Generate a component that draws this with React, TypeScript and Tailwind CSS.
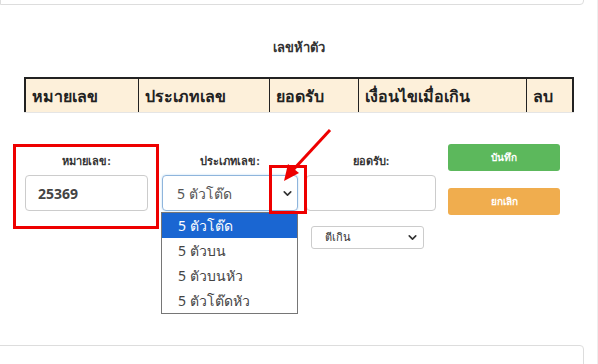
import { ChevronDown } from "lucide-react";

const columns = [
  { label: "หมายเลข", w: "w-[113px]" },
  { label: "ประเภทเลข", w: "w-[131px]" },
  { label: "ยอดรับ", w: "w-[89px]" },
  { label: "เงื่อนไขเมื่อเกิน", w: "w-[168px]" },
  { label: "ลบ", w: "flex-1" },
];

const options = ["5 ตัวโต๊ด", "5 ตัวบน", "5 ตัวบนหัว", "5 ตัวโต๊ดหัว"];

export default function App() {
  return (
    <div
      className="relative w-[598px] h-[364px] overflow-hidden bg-white text-[#333]"
      style={{ fontFamily: '"Tahoma", "Noto Sans", "DejaVu Sans", sans-serif' }}
    >
      {/* Previous card (cut off) */}
      <div className="absolute left-0 top-[-20px] w-[584px] h-[25px] border border-[#ddd] rounded-br" />
      <div className="absolute right-0 top-0 h-full w-px bg-[#eee]" />

      <div className="pt-[38px]">
        <h3 className="text-center text-[13px] font-bold text-[#333] leading-[18px]">เลขห้าตัว</h3>

        {/* Table header */}
        <div className="mt-[21px] ml-[24px] w-[550px] flex h-[35px] bg-[#fdf0da] border-t-2 border-l-2 border-r-2 border-[#222]">
          {columns.map((c, i) => (
            <div
              key={c.label}
              className={`${c.w} flex items-center pl-[6px] text-[16px] font-bold text-[#222] ${
                i !== columns.length - 1 ? "border-r border-[#222]" : ""
              }`}
            >
              {c.label}
            </div>
          ))}
        </div>
        <div className="ml-[24px] w-[550px] h-px bg-[#e5e5e5]" />

        {/* Form row */}
        <div className="mt-[31px] flex items-start">
          <div className="ml-[25px] w-[123px] flex flex-col items-center pt-[10px]">
            <label className="text-[11px] font-bold leading-[14px] mb-[7px]">หมายเลข:</label>
            <div className="w-full h-[36px] border border-[#ccc] rounded-[4px] flex items-center pl-[12px] text-[14px] font-bold text-[#444]">
              25369
            </div>
          </div>

          <div className="ml-[14px] w-[136px] flex flex-col items-center pt-[10px]">
            <label className="text-[11px] font-bold leading-[14px] mb-[7px]">ประเภทเลข:</label>
            <div className="relative w-full h-[36px] border border-[#8fb5dc] rounded-[4px] flex items-center pl-[14px] text-[14px] text-[#555] shadow-[0_0_2px_rgba(102,175,233,0.5)]">
              5 ตัวโต๊ด
              <ChevronDown className="absolute right-[3px] top-[11px] w-[13px] h-[13px] text-[#333]" strokeWidth={3} />
            </div>
          </div>

          <div className="ml-[8px] w-[130px] flex flex-col items-center pt-[10px]">
            <label className="text-[11px] font-bold leading-[14px] mb-[7px]">ยอดรับ:</label>
            <div className="w-full h-[36px] border border-[#ccc] rounded-[4px]" />
          </div>

          <div className="ml-[12px] w-[112px] flex flex-col gap-[17px]">
            <button className="h-[27px] rounded-[3px] bg-[#5cb85c] text-white text-[10px] font-bold">บันทึก</button>
            <button className="h-[27px] rounded-[3px] bg-[#f0ad4e] text-white text-[10px] font-bold">ยกเลิก</button>
          </div>
        </div>

        {/* Condition select */}
        <div className="mt-[11px] ml-[311px] w-[113px] h-[23px] border border-[#ccc] rounded-[3px] flex items-center justify-between pl-[13px] pr-[4px] text-[11px] text-[#333]">
          ตีเกิน
          <ChevronDown className="w-[13px] h-[13px]" strokeWidth={3} />
        </div>
      </div>

      {/* Open dropdown list */}
      <div className="absolute left-[161px] top-[212px] w-[137px] border border-[#767676] bg-white">
        {options.map((o, i) => (
          <div
            key={o}
            className={`h-[25px] flex items-center pl-[16px] text-[14px] ${
              i === 0 ? "bg-[#1a66d2] text-white" : "text-[#444]"
            }`}
          >
            {o}
          </div>
        ))}
      </div>

      {/* Next card (cut off) */}
      <div className="absolute left-[-2px] top-[345px] w-[586px] h-[40px] border border-[#ddd] rounded-tr" />

      {/* Annotations */}
      <div className="absolute left-[13px] top-[144px] w-[146px] h-[85px] border-[3px] border-[#e00]" />
      <div className="absolute left-[269px] top-[165px] w-[38px] h-[49px] border-[3px] border-[#e00]" />
      <svg className="absolute left-0 top-0" width="598" height="364">
        <line x1="330" y1="130" x2="293" y2="170" stroke="#e00" strokeWidth="3" />
        <polygon points="284,181 288,164 299,173" fill="#e00" />
      </svg>
    </div>
  );
}
